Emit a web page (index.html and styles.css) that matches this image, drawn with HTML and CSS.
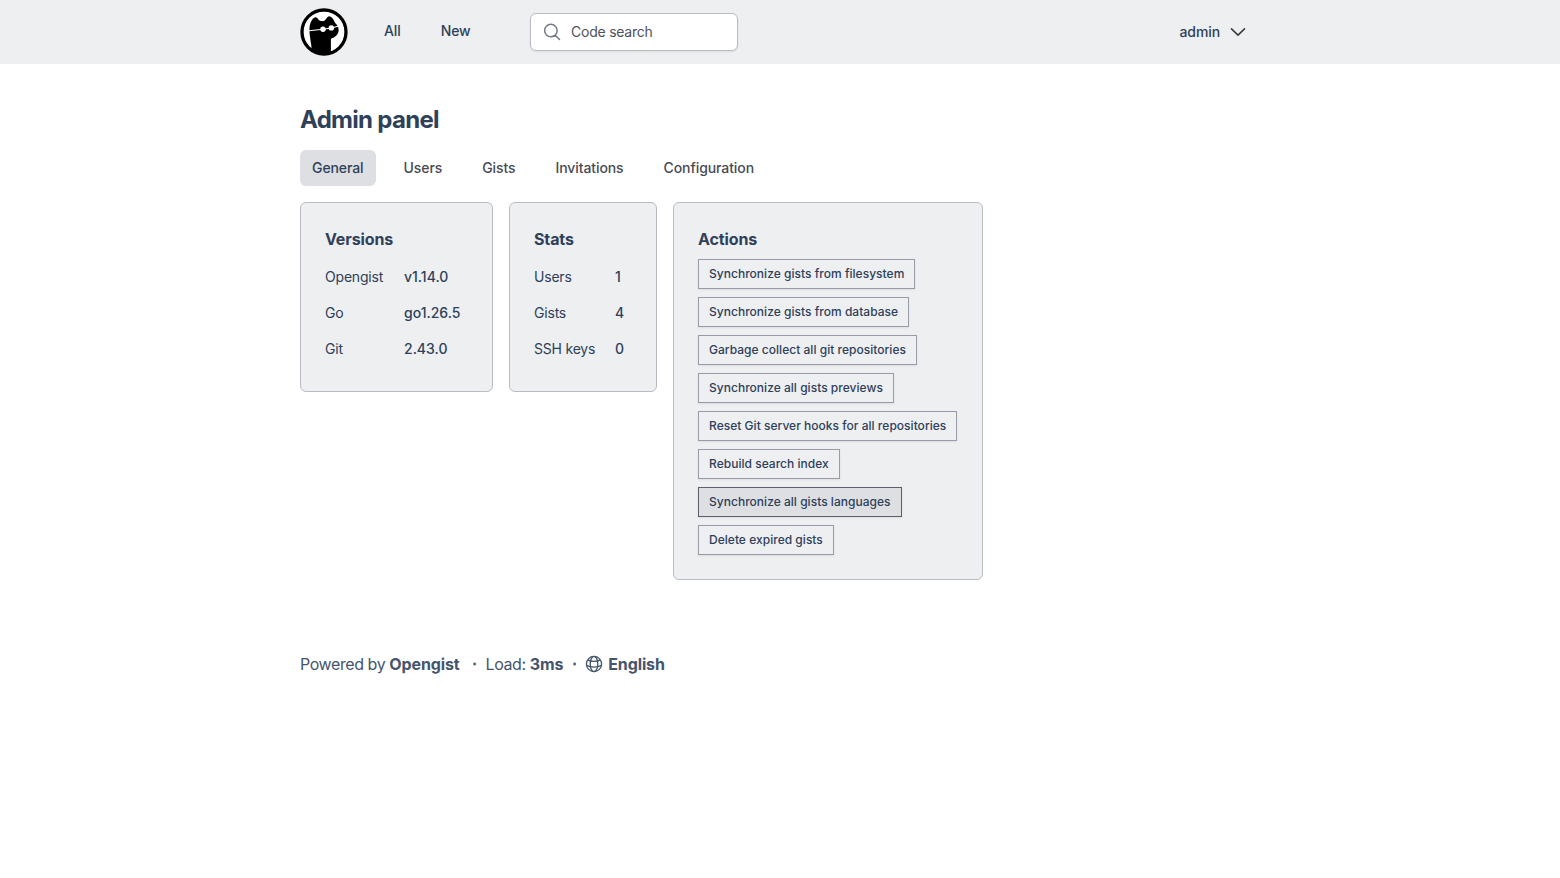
FILE: index.html
```
<!DOCTYPE html>
<html lang="en">
<head>
    <meta charset="utf-8">
    <title>Admin panel - Opengist</title>
    <link rel="stylesheet" href="styles.css">
</head>
<body>
    <header class="navbar">
        <div class="container navbar-inner">
            <a href="#" class="logo">
                <svg width="48" height="48" viewBox="0 0 48 48">
                    <circle cx="24" cy="24" r="22" fill="#fff" stroke="#000" stroke-width="3.3"/>
                    <path d="M9.4 22C9.4 18 10.2 14.6 12 12C13.3 10.1 14.8 9 16.4 9.4C18 10 18.8 12.6 20.6 13C21.8 13.2 23 13.2 24.2 12.8C26 12 27 8.4 29.2 8.2C31.6 8.2 34 12 35.2 15C37.6 17 38.8 19.8 38.6 22.6C38.4 26.6 35.3 29.4 30.9 30.8V46H22L11.8 42.5C11.4 35 9.4 29 9.4 22Z"/>
                    <path d="M8.8 22.7L23 21.2L31.3 20L38 18.3" fill="none" stroke="#fff" stroke-width="1.1"/>
                    <circle cx="23" cy="21.2" r="2.7" fill="#fff"/>
                    <circle cx="31.3" cy="19.9" r="2.7" fill="#fff"/>
                </svg>
            </a>
            <nav class="nav-links">
                <a href="#">All</a>
                <a href="#">New</a>
            </nav>
            <form class="search">
                <svg class="search-icon" width="20" height="20" viewBox="0 0 24 24" fill="none" stroke="currentColor" stroke-width="1.8" stroke-linecap="round" stroke-linejoin="round">
                    <path d="M21 21l-5.2-5.2m0 0A7.5 7.5 0 105.2 5.2a7.5 7.5 0 0010.6 10.6z"/>
                </svg>
                <input type="text" placeholder="Code search">
            </form>
            <a href="#" class="user-menu">
                admin
                <svg width="20" height="20" viewBox="0 0 24 24" fill="none" stroke="#3b3c42" stroke-width="1.9" stroke-linecap="round" stroke-linejoin="round">
                    <path d="M19.8 8.25L12 15.75 4.2 8.25"/>
                </svg>
            </a>
        </div>
    </header>

    <main class="container">
        <h1>Admin panel</h1>

        <nav class="tabs">
            <a href="#" class="active">General</a>
            <a href="#">Users</a>
            <a href="#">Gists</a>
            <a href="#">Invitations</a>
            <a href="#">Configuration</a>
        </nav>

        <div class="cards">
            <section class="card versions">
                <h2>Versions</h2>
                <dl>
                    <dt>Opengist</dt><dd>v1.14.0</dd>
                    <dt>Go</dt><dd>go1.26.5</dd>
                    <dt>Git</dt><dd>2.43.0</dd>
                </dl>
            </section>

            <section class="card stats">
                <h2>Stats</h2>
                <dl>
                    <dt>Users</dt><dd>1</dd>
                    <dt>Gists</dt><dd>4</dd>
                    <dt>SSH keys</dt><dd>0</dd>
                </dl>
            </section>

            <section class="card actions">
                <h2>Actions</h2>
                <div class="action-list">
                    <button type="button">Synchronize gists from filesystem</button>
                    <button type="button">Synchronize gists from database</button>
                    <button type="button">Garbage collect all git repositories</button>
                    <button type="button">Synchronize all gists previews</button>
                    <button type="button">Reset Git server hooks for all repositories</button>
                    <button type="button">Rebuild search index</button>
                    <button type="button" class="focused">Synchronize all gists languages</button>
                    <button type="button">Delete expired gists</button>
                </div>
            </section>
        </div>
    </main>

    <footer class="container footer">
        <span>Powered by <a href="#">Opengist</a></span>
        <span class="dot dot-first">⋅</span>
        <span>Load: <b>3ms</b></span>
        <span class="dot dot-second">⋅</span>
        <a href="#" class="language">
            <svg width="18" height="18" viewBox="0 0 18 18" fill="none" stroke="currentColor" stroke-width="1.3">
                <circle cx="9" cy="9" r="7.6"/>
                <ellipse cx="9" cy="9" rx="3.8" ry="7.6"/>
                <path d="M2.8 4.9C5.8 6.9 12.2 6.9 15.2 4.9M1.5 10.4C5.5 12.7 12.5 12.7 16.5 10.4"/>
            </svg>
            <span>English</span>
        </a>
    </footer>
</body>
</html>
```
FILE: styles.css
```
* {
    box-sizing: border-box;
}

body {
    margin: 0;
    font-family: Inter, sans-serif;
    font-size: 16px;
    line-height: 24px;
    color: #2f415a;
    background-color: #fff;
}

a {
    color: inherit;
    text-decoration: none;
}

h1, h2, dl, dd {
    margin: 0;
}

.container {
    width: 960px;
    margin: 0 auto;
}

.navbar {
    height: 64px;
    background-color: #eeeff1;
}

.navbar-inner {
    display: flex;
    align-items: center;
    height: 64px;
}

.logo svg {
    display: block;
}

.nav-links {
    display: flex;
    gap: 40px;
    width: 146px;
    margin-left: 36px;
    padding-bottom: 2px;
    font-size: 14px;
    font-weight: 500;
    letter-spacing: -0.1px;
}

.search {
    display: flex;
    align-items: center;
    width: 208px;
    height: 38px;
    padding: 0 11px;
    border: 1px solid #babcc5;
    border-radius: 6px;
    background-color: #fff;
    box-shadow: 0 1px 2px rgba(0, 0, 0, 0.08);
}

.search-icon {
    flex: none;
    color: #75798a;
}

.search input {
    width: 150px;
    margin-left: 9px;
    padding: 0;
    border: 0;
    outline: 0;
    font: 14px/20px Inter, sans-serif;
    letter-spacing: -0.23px;
    background: none;
}

.search input::placeholder {
    color: #4f515c;
}

.user-menu {
    display: flex;
    align-items: center;
    gap: 8px;
    margin-left: auto;
    margin-right: 12px;
    font-size: 14px;
    font-weight: 500;
    letter-spacing: -0.1px;
}

h1 {
    padding-top: 40px;
    font-size: 24px;
    line-height: 32px;
    font-weight: 700;
    letter-spacing: -0.7px;
}

.tabs {
    display: flex;
    gap: 16px;
    margin-top: 14px;
    font-size: 14px;
    line-height: 20px;
    font-weight: 500;
    letter-spacing: -0.09px;
    color: #484a54;
}

.tabs a {
    padding: 8px 12px;
    border-radius: 6px;
}

.tabs .active {
    color: #2f415a;
    background-color: #dedfe3;
}

.cards {
    display: flex;
    align-items: flex-start;
    gap: 16px;
    margin-top: 16px;
}

.card {
    padding: 24px;
    border: 1px solid #babcc5;
    border-radius: 6px;
    background-color: #eeeff1;
}

.versions {
    width: 193px;
    height: 190px;
}

.stats {
    width: 148px;
    height: 190px;
}

.actions {
    width: 310px;
    height: 378px;
}

h2 {
    font-size: 16px;
    line-height: 24px;
    font-weight: 700;
    letter-spacing: -0.12px;
}

dl {
    display: grid;
    grid-auto-rows: 20px;
    row-gap: 16px;
    margin-top: 16px;
    font-size: 14px;
    line-height: 20px;
    white-space: nowrap;
}

.versions dl {
    grid-template-columns: 79px auto;
}

.stats dl {
    grid-template-columns: 81px auto;
}

dt {
    letter-spacing: -0.2px;
}

dd {
    font-weight: 500;
}

.action-list {
    display: flex;
    flex-direction: column;
    align-items: flex-start;
    gap: 8px;
    margin-top: 8px;
}

button {
    height: 30px;
    padding: 0 10px 1px;
    border: 1px solid #999ba8;
    font: 500 12px/16px Inter, sans-serif;
    letter-spacing: 0.025px;
    color: #2f415a;
    white-space: nowrap;
    background-color: #eeeff1;
    box-shadow: 0 1px 2px rgba(0, 0, 0, 0.08);
}

button.focused {
    border-color: #5b5e6b;
    background-color: #dedfe3;
}

.footer {
    display: flex;
    align-items: center;
    margin-top: 72px;
    letter-spacing: -0.42px;
    color: #45556c;
}

.footer a,
.footer b {
    font-weight: 700;
    letter-spacing: -0.12px;
}

.dot {
    font-weight: 700;
    text-align: center;
}

.dot-first {
    width: 26px;
    padding-left: 4px;
}

.dot-second {
    width: 22px;
}

.language {
    display: flex;
    align-items: center;
    gap: 5px;
}
```
